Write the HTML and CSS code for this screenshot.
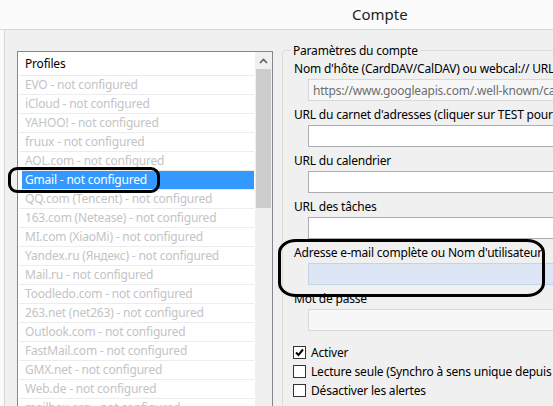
FILE: index.html
```html
<!DOCTYPE html>
<html lang="fr">
<head>
  <meta charset="UTF-8">
  <title>Compte</title>
  <link rel="stylesheet" href="styles.css">
</head>
<body>

  <div class="titlebar"><span class="title">Compte</span></div>

  <div class="page">
    <div class="listbox">
      <div class="rows">
        <div class="head">Profiles</div>
        <div class="row">EVO - not configured</div>
        <div class="row">iCloud - not configured</div>
        <div class="row">YAHOO! - not configured</div>
        <div class="row">fruux - not configured</div>
        <div class="row">AOL.com - not configured</div>
        <div class="row sel">Gmail - not configured</div>
        <div class="row">QQ.com (Tencent) - not configured</div>
        <div class="row">163.com (Netease) - not configured</div>
        <div class="row">MI.com (XiaoMi) - not configured</div>
        <div class="row">Yandex.ru (Яндекс) - not configured</div>
        <div class="row">Mail.ru - not configured</div>
        <div class="row">Toodledo.com - not configured</div>
        <div class="row">263.net (net263) - not configured</div>
        <div class="row">Outlook.com - not configured</div>
        <div class="row">FastMail.com - not configured</div>
        <div class="row">GMX.net - not configured</div>
        <div class="row">Web.de - not configured</div>
        <div class="row">mailbox.org - not configured</div>
      </div>
      <div class="scrollbar">
        <div class="arrow">
          <svg width="9" height="6" viewBox="0 0 9 6"><path d="M1 5 L4.5 1.5 L8 5" fill="none" stroke="#606060" stroke-width="1.6"/></svg>
        </div>
        <div class="thumb"></div>
      </div>
    </div>

    <fieldset class="group">
      <legend>Paramètres du compte</legend>
      <div class="lbl">Nom d'hôte (CardDAV/CalDAV) ou webcal:// URL</div>
      <div class="field off">https://www.googleapis.com/.well-known/caldav</div>
      <div class="lbl">URL du carnet d'adresses (cliquer sur TEST pour compléter)</div>
      <div class="field"></div>
      <div class="lbl">URL du calendrier</div>
      <div class="field"></div>
      <div class="lbl">URL des tâches</div>
      <div class="field"></div>
      <div class="lbl">Adresse e-mail complète ou Nom d'utilisateur</div>
      <div class="field focus"></div>
      <div class="lbl">Mot de passe</div>
      <div class="field off"></div>

      <div class="checks">
        <div class="check"><span class="box on"><svg width="11" height="11" viewBox="0 0 11 11"><path d="M2 5.5 L4.5 8 L9 2.5" fill="none" stroke="#000" stroke-width="2"/></svg></span>Activer</div>
        <div class="check"><span class="box"></span>Lecture seule (Synchro à sens unique depuis le serveur)</div>
        <div class="check"><span class="box"></span>Désactiver les alertes</div>
      </div>
    </fieldset>

    <div class="mark mark-gmail"></div>
    <div class="mark mark-email"></div>
  </div>

</body>
</html>
```

FILE: styles.css
```css
body { margin: 0; width: 553px; height: 406px; overflow: hidden; background: #fafafa; font-family: "Noto Sans", sans-serif; font-size: 12px; letter-spacing: -0.2px; color: #000; }

.titlebar { height: 30px; box-sizing: border-box; border-bottom: 1px solid #dadada; background: #fbfbfb; }
.title { display: block; padding-left: 352px; padding-top: 5px; font-size: 15px; line-height: 18px; letter-spacing: 0; color: #222; }

.page { position: relative; display: flex; align-items: flex-start; margin-left: 4px; height: 376px; border-left: 1px solid #d6d6d6; background: #f0f0f0; }

.listbox { display: flex; margin: 21px 0 0 12px; width: 256px; height: 400px; box-sizing: border-box; border: 1px solid #828790; background: #fff; }
.rows { width: 236px; margin-left: 1px; }
.head { height: 23px; line-height: 23px; padding-left: 6px; border-bottom: 1px solid #e8ebef; }
.row { height: 18px; line-height: 18px; padding-left: 6px; border-bottom: 1px solid #ececec; color: #c4c4c4; white-space: nowrap; }
.row.sel { color: #fff; background: linear-gradient(to right, transparent 3px, #3399ff 3px); }

.scrollbar { width: 17px; margin-left: 1px; background: #f0f0f0; }
.arrow { height: 17px; display: flex; align-items: center; justify-content: center; }
.thumb { margin: 0 1px; height: 139px; background: #cdcdcd; }

.group { margin: 13px 0 0 9px; padding: 0 0 0 11px; width: 400px; height: 400px; border: 1px solid #dcdcdc; border-radius: 3px; }
.group legend { margin-left: -3px; padding: 0 2px; line-height: 15px; }

.lbl { line-height: 15px; margin-top: 6px; white-space: nowrap; }
.group legend + .lbl { margin-top: 3px; }
.field { height: 22px; box-sizing: border-box; margin: 3px 0 0 14px; border: 1px solid #abadb3; background: #fff; padding: 3px 4px; line-height: 15px; white-space: nowrap; overflow: hidden; }
.field.off { border-color: #d9d9d9; background: #f7f7f7; color: #6d6d6d; }
.field.focus { background: #dce6f4; border-color: #c5d3e6; }

.checks { margin-top: 12px; }
.check { display: flex; align-items: center; gap: 5px; height: 19px; margin-left: -1px; white-space: nowrap; }
.box { width: 13px; height: 13px; box-sizing: border-box; border: 1px solid #333; background: #fff; display: flex; align-items: center; justify-content: center; }

.mark { position: absolute; border: 3px solid #000; }
.mark-gmail { left: 3px; top: 137px; width: 146px; height: 20px; border-radius: 9px; }
.mark-email { left: 273px; top: 209px; width: 261px; height: 52px; border-radius: 18px / 14px; }
```
